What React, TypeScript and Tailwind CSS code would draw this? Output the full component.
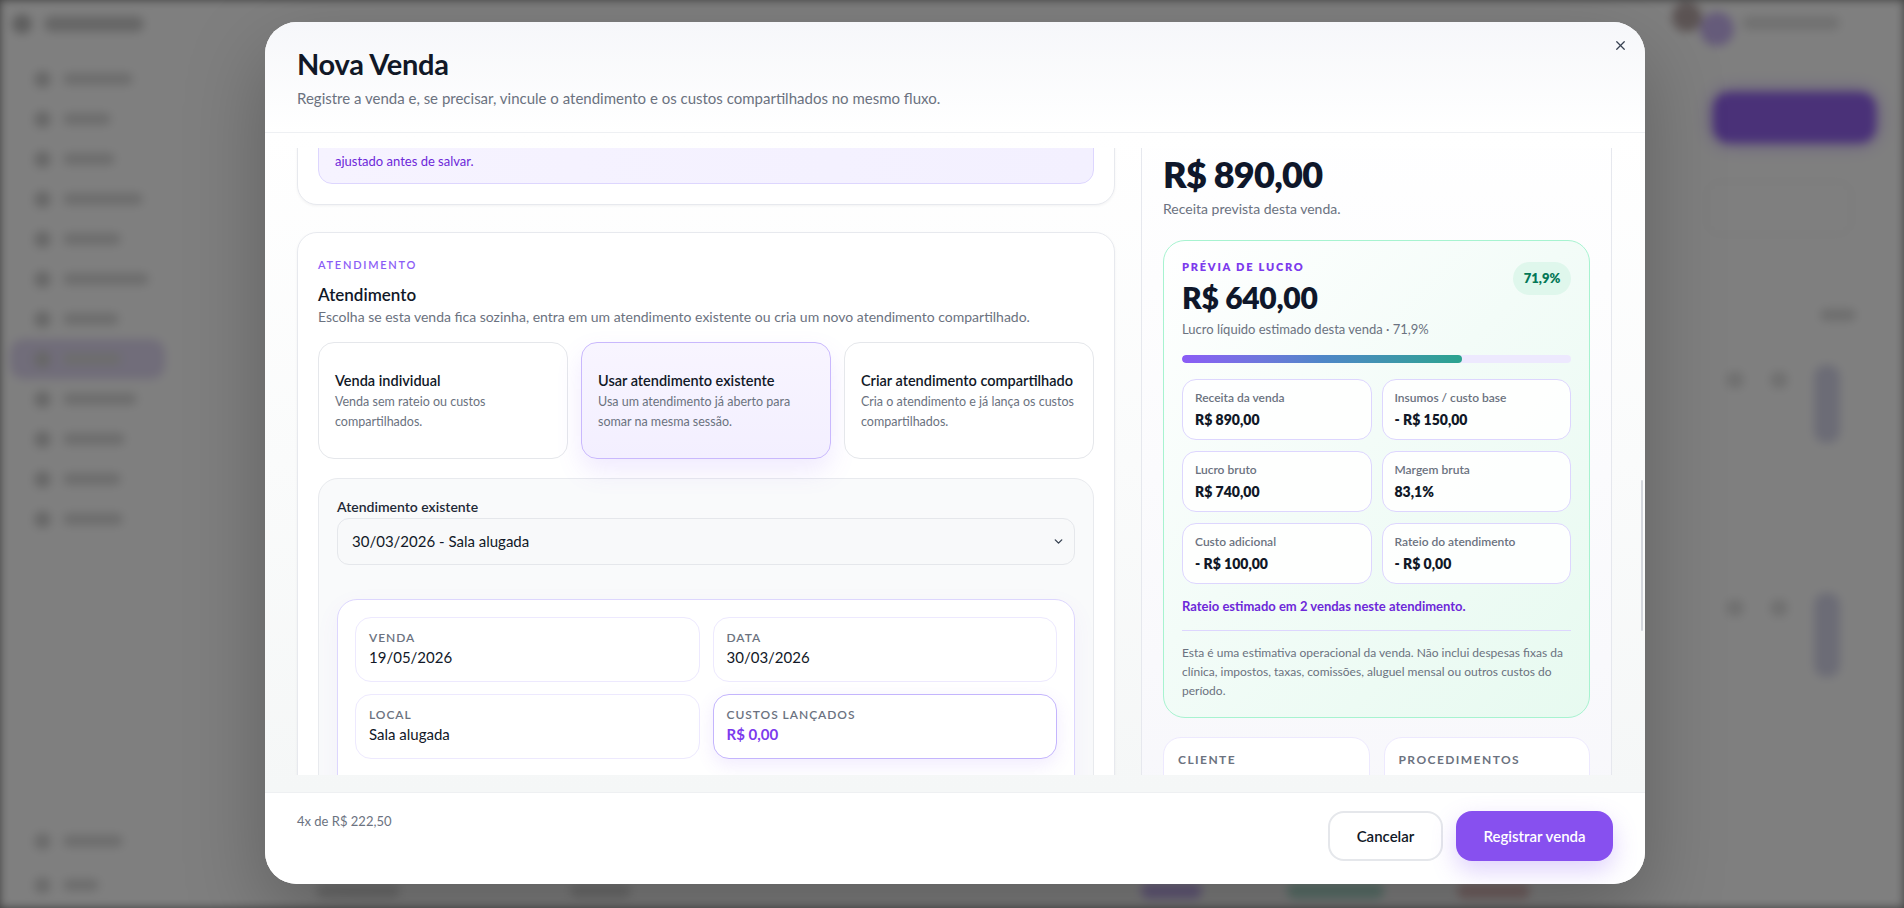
import React from "react";
import { X, ChevronDown } from "lucide-react";

const navItems = [
  { w: 70 },
  { w: 48 },
  { w: 52 },
  { w: 80 },
  { w: 58 },
  { w: 86 },
  { w: 56 },
  { w: 58, active: true },
  { w: 74 },
  { w: 62 },
  { w: 58 },
  { w: 60 },
];

function Backdrop() {
  return (
    <div className="absolute inset-0 flex bg-white blur-[5px]">
      <aside className="flex w-[175px] flex-col px-[10px] pt-[14px] pb-[8px]">
        <div className="flex h-[20px] items-center gap-[12px] pl-[2px]">
          <div className="h-[20px] w-[20px] rounded-full bg-[#bdbdbd]" />
          <div className="h-[16px] w-[100px] rounded-full bg-[#cdcdcd]" />
        </div>
        <div className="mt-[25px] flex flex-col">
          {navItems.map((n, i) => (
            <div
              key={i}
              className={
                n.active
                  ? "flex h-[40px] items-center gap-[12px] rounded-[14px] bg-[#e2daf4] pl-[24px]"
                  : "flex h-[40px] items-center gap-[12px] rounded-[14px] pl-[24px]"
              }
            >
              <div className="h-[17px] w-[17px] rounded-full bg-[#cfcfcf]" />
              <div className="h-[12px] rounded-full bg-[#dadada]" style={{ width: n.w }} />
            </div>
          ))}
        </div>
        <div className="mt-auto flex flex-col gap-[14px]">
          <div className="flex h-[30px] items-center gap-[12px] pl-[24px]">
            <div className="h-[17px] w-[17px] rounded-full bg-[#d6d6d6]" />
            <div className="h-[12px] w-[60px] rounded-full bg-[#dadada]" />
          </div>
          <div className="flex h-[30px] items-center gap-[12px] pl-[24px]">
            <div className="h-[17px] w-[17px] rounded-full bg-[#d6d6d6]" />
            <div className="h-[12px] w-[36px] rounded-full bg-[#dadada]" />
          </div>
        </div>
      </aside>
      <main className="flex flex-1 flex-col items-end pr-[28px]">
        <div className="flex h-[56px] items-start gap-[8px] pt-[2px] pr-[36px]">
          <div className="h-[30px] w-[30px] rounded-full bg-[#b9a9a9]" />
          <div className="-ml-[10px] mt-[10px] h-[34px] w-[34px] rounded-full bg-[#cbb6f5]" />
          <div className="mt-[14px] h-[14px] w-[98px] rounded-full bg-[#e2e2e2]" />
        </div>
        <div className="mt-[36px] h-[51px] w-[163px] rounded-[16px] bg-[#9463f1] shadow-[0_0_18px_rgba(148,99,241,0.6)]" />
        <div className="mt-[38px] mr-[24px] h-[54px] w-[146px] rounded-[12px] border border-[#e6e6e6] bg-white" />
        <div className="mt-[74px] mr-[20px] h-[12px] w-[36px] rounded-full bg-[#dcdcdc]" />
        <div className="mt-[44px] flex items-start gap-[26px] pr-[36px]">
          <div className="mt-[6px] h-[18px] w-[18px] rounded-full bg-[#e0e0e0]" />
          <div className="mt-[6px] h-[18px] w-[18px] rounded-full bg-[#e0e0e0]" />
          <div className="h-[78px] w-[26px] rounded-[12px] bg-[#d8d8ec]" />
        </div>
        <div className="mt-[150px] flex items-start gap-[26px] pr-[36px]">
          <div className="mt-[6px] h-[18px] w-[18px] rounded-full bg-[#e0e0e0]" />
          <div className="mt-[6px] h-[18px] w-[18px] rounded-full bg-[#e0e0e0]" />
          <div className="h-[84px] w-[26px] rounded-[12px] bg-[#d8d8ec]" />
        </div>
        <div className="mt-auto mb-[8px] flex h-[18px] w-full items-center">
          <div className="ml-[141px] h-[14px] w-[84px] rounded-full bg-[#dcdcdc]" />
          <div className="ml-[170px] h-[14px] w-[61px] rounded-full bg-[#dcdcdc]" />
          <div className="ml-[510px] h-[16px] w-[61px] rounded-full bg-[#c8b4f5]" />
          <div className="ml-[85px] h-[16px] w-[97px] rounded-full bg-[#b5e3d5]" />
          <div className="ml-[73px] h-[16px] w-[73px] rounded-full bg-[#e6c4c4]" />
        </div>
      </main>
    </div>
  );
}

function OptionCard({
  title,
  lines,
  selected,
}: {
  title: string;
  lines: string[];
  selected?: boolean;
}) {
  return (
    <div
      className={
        selected
          ? "flex h-[117px] flex-col justify-center rounded-[16px] border border-[#c9b8fd] bg-gradient-to-b from-[#f8f5ff] to-[#f3efff] px-4 shadow-[0_12px_26px_rgba(139,92,246,0.13)]"
          : "flex h-[117px] flex-col justify-center rounded-[16px] border border-[#e5e7eb] bg-white px-4"
      }
    >
      <div className="whitespace-nowrap text-[14.5px] font-semibold leading-[22px] text-[#111827]">{title}</div>
      {lines.map((l) => (
        <div key={l} className="whitespace-nowrap text-[12.5px] leading-5 text-[#6b7280]">
          {l}
        </div>
      ))}
    </div>
  );
}

function InfoCell({ label, value, accent }: { label: string; value: string; accent?: boolean }) {
  return (
    <div
      className={
        accent
          ? "rounded-[16px] border border-[#c4b5fd] bg-white px-[13px] pt-[12px] pb-[14px] shadow-[0_6px_18px_rgba(139,92,246,0.12)]"
          : "rounded-[16px] border border-[#ede9fe] bg-white px-[13px] pt-[12px] pb-[14px]"
      }
    >
      <div className="text-[12px] font-semibold uppercase leading-4 tracking-[0.08em] text-[#6b7280]">{label}</div>
      <div
        className={
          accent
            ? "mt-px text-[15px] font-bold leading-5 text-[#7c3aed]"
            : "mt-px text-[15px] leading-5 text-[#111827]"
        }
      >
        {value}
      </div>
    </div>
  );
}

function Metric({ label, value }: { label: string; value: string }) {
  return (
    <div className="rounded-[14px] border border-[#ddd6fe] bg-white/90 px-[12px] pt-[10px] pb-[9px]">
      <div className="text-[12px] font-semibold leading-4 text-[#6b7280]">{label}</div>
      <div className="mt-[4px] text-[14px] font-extrabold leading-5 text-[#111827]">{value}</div>
    </div>
  );
}

function LeftColumn() {
  return (
    <div className="flex flex-col gap-[27px]">
      <section className="rounded-[20px] border border-[#e7e9ee] bg-white p-5 shadow-[0_1px_3px_rgba(15,23,42,0.05)]">
        <div className="rounded-[14px] border border-[#ddd6fe] bg-gradient-to-r from-[#f6f3ff] to-[#f3f0ff] px-4 pt-[34px] pb-[12px] text-[13px] leading-5 text-[#6d28d9]">
          <span className="block">ajustado antes de salvar.</span>
        </div>
      </section>

      <section className="rounded-[20px] border border-[#e7e9ee] bg-white px-5 pt-6 pb-5 shadow-[0_1px_3px_rgba(15,23,42,0.05)]">
        <div className="text-[11px] font-semibold leading-4 tracking-[0.16em] text-[#8b5cf6]">ATENDIMENTO</div>
        <h3 className="mt-[10px] text-[17px] font-semibold leading-6 text-[#111827]">Atendimento</h3>
        <p className="text-[14px] leading-5 text-[#6b7280]">
          Escolha se esta venda fica sozinha, entra em um atendimento existente ou cria um novo atendimento compartilhado.
        </p>
        <div className="mt-[15px] grid grid-cols-3 gap-[13px]">
          <OptionCard title="Venda individual" lines={["Venda sem rateio ou custos", "compartilhados."]} />
          <OptionCard
            title="Usar atendimento existente"
            lines={["Usa um atendimento já aberto para", "somar na mesma sessão."]}
            selected
          />
          <OptionCard
            title="Criar atendimento compartilhado"
            lines={["Cria o atendimento e já lança os custos", "compartilhados."]}
          />
        </div>

        <div className="mt-[19px] rounded-[20px] border border-[#e8eaee] bg-[#f9fafb] px-[18px] pt-[18px] pb-[18px]">
          <label className="block text-[14px] font-semibold leading-5 text-[#1f2937]">Atendimento existente</label>
          <div className="mt-px flex h-[47px] items-center justify-between rounded-[12px] border border-[#e5e7eb] bg-[#f8f9fa] pl-[14px] pr-[9px] text-[15px] text-[#111827]">
            <span>30/03/2026 - Sala alugada</span>
            <ChevronDown size={13} strokeWidth={2.5} className="text-[#374151]" />
          </div>
          <div className="mt-[34px] rounded-[20px] border border-[#ddd6fe] bg-white p-[17px] shadow-[0_8px_24px_rgba(139,92,246,0.06)]">
            <div className="grid grid-cols-2 gap-x-[13px] gap-y-[12px]">
              <InfoCell label="Venda" value="19/05/2026" />
              <InfoCell label="Data" value="30/03/2026" />
              <InfoCell label="Local" value="Sala alugada" />
              <InfoCell label="Custos lançados" value="R$ 0,00" accent />
            </div>
            <div className="mt-[24px] h-[60px] rounded-[14px] border border-[#ede9fe] bg-[#faf8ff]" />
          </div>
        </div>
      </section>
    </div>
  );
}

function RightPanel() {
  return (
    <aside className="rounded-[24px] border border-[#e6e8ee] bg-gradient-to-b from-white to-[#f7f7fb] px-[21px] pt-5 pb-6">
      <div className="h-4" />
      <div className="mt-[22px] text-[36px] font-extrabold leading-10 tracking-[-0.02em] text-[#0f172a]">R$ 890,00</div>
      <div className="mt-[5px] text-[14px] leading-5 text-[#6b7280]">Receita prevista desta venda.</div>

      <div className="mt-[21px] rounded-[22px] border border-[#a7f3d0] bg-[linear-gradient(135deg,#ffffff_0%,#f3fcf8_45%,#e7faf0_100%)] px-[18px] pt-[18px] pb-[17px]">
        <div className="flex items-start justify-between">
          <div>
            <div className="text-[11px] font-extrabold leading-4 tracking-[0.16em] text-[#7c3aed]">PRÉVIA DE LUCRO</div>
            <div className="mt-1 text-[30px] font-extrabold leading-9 tracking-[-0.01em] text-[#0f172a]">R$ 640,00</div>
            <div className="mt-[5px] text-[13px] leading-[18px] text-[#6b7280]">Lucro líquido estimado desta venda · 71,9%</div>
          </div>
          <div className="mt-[3px] flex h-[33px] w-[58px] items-center justify-center rounded-full bg-[#dff7ec] text-[13px] font-extrabold text-[#047857]">
            71,9%
          </div>
        </div>
        <div className="mt-[17px] h-2 w-full overflow-hidden rounded-full bg-[#ede9fe]">
          <div
            className="h-full rounded-full bg-gradient-to-r from-[#8b5cf6] via-[#4f86c8] to-[#2aa38e]"
            style={{ width: "71.9%" }}
          />
        </div>
        <div className="mt-4 grid grid-cols-2 gap-x-[10px] gap-y-[11px]">
          <Metric label="Receita da venda" value="R$ 890,00" />
          <Metric label="Insumos / custo base" value="- R$ 150,00" />
          <Metric label="Lucro bruto" value="R$ 740,00" />
          <Metric label="Margem bruta" value="83,1%" />
          <Metric label="Custo adicional" value="- R$ 100,00" />
          <Metric label="Rateio do atendimento" value="- R$ 0,00" />
        </div>
        <div className="mt-[13px] text-[13px] font-bold leading-[18px] text-[#6d28d9]">
          Rateio estimado em 2 vendas neste atendimento.
        </div>
        <div className="mt-[15px] border-t border-[#ddd6fe]" />
        <p className="mt-[12px] text-[12px] leading-[19px] text-[#6b7280]">
          Esta é uma estimativa operacional da venda. Não inclui despesas fixas da clínica, impostos, taxas, comissões, aluguel
          mensal ou outros custos do período.
        </p>
      </div>

      <div className="mt-[19px] grid grid-cols-2 gap-[14px]">
        <div className="h-[90px] rounded-[18px] border border-[#ede9fe] bg-white px-[14px] pt-[14px]">
          <div className="text-[12px] font-bold leading-4 tracking-[0.12em] text-[#6b7280]">CLIENTE</div>
        </div>
        <div className="h-[90px] rounded-[18px] border border-[#ede9fe] bg-white px-[14px] pt-[14px]">
          <div className="text-[12px] font-bold leading-4 tracking-[0.12em] text-[#6b7280]">PROCEDIMENTOS</div>
        </div>
      </div>
    </aside>
  );
}

function Modal() {
  return (
    <div className="relative flex h-[862px] w-[1380px] flex-col overflow-hidden rounded-[32px] bg-white shadow-[0_30px_80px_rgba(0,0,0,0.25)]">
      <header className="border-b border-[#eef0f3] bg-gradient-to-b from-[#f6f7fa] to-white px-8 pt-6 pb-[23px]">
        <h2 className="text-[29px] font-bold leading-9 tracking-[-0.01em] text-[#111827]">Nova Venda</h2>
        <p className="mt-[5px] text-[15px] leading-[22px] text-[#6b7280]">
          Registre a venda e, se precisar, vincule o atendimento e os custos compartilhados no mesmo fluxo.
        </p>
      </header>
      <button className="absolute right-[13px] top-[11px] flex h-6 w-6 items-center justify-center text-[#374151]">
        <X size={15} strokeWidth={2} />
      </button>

      <div className="relative flex-1 overflow-hidden bg-gradient-to-b from-white to-[#f5f7f7] pt-[15px] pb-[17px]">
        <div className="h-full overflow-hidden px-8">
          <div className="-mt-[53px] grid grid-cols-[818px_471px] items-start gap-[26px]">
            <LeftColumn />
            <RightPanel />
          </div>
        </div>
        <div className="absolute right-[2px] top-[347px] h-[151px] w-[2px] rounded-full bg-[#d3d6dc]" />
      </div>

      <footer className="flex h-[92px] items-start justify-between border-t border-[#eef0f2] bg-white px-8 pt-[18px]">
        <div className="text-[13px] leading-5 text-[#6b7280]">4x de R$ 222,50</div>
        <div className="flex gap-[13px]">
          <button className="h-[50px] w-[115px] rounded-[16px] border-2 border-[#e5e7eb] bg-white text-[15px] font-semibold text-[#111827]">
            Cancelar
          </button>
          <button className="h-[50px] w-[157px] rounded-[16px] bg-[#8750ef] text-[15px] font-semibold text-white shadow-[0_10px_25px_rgba(139,92,246,0.28)]">
            Registrar venda
          </button>
        </div>
      </footer>
    </div>
  );
}

export default function App() {
  return (
    <div className="relative h-[908px] w-[1904px] overflow-hidden bg-[#808080] font-['Lato','Noto_Sans',sans-serif]">
      <Backdrop />
      <div className="absolute inset-0 bg-black/50" />
      <div className="absolute inset-0 flex justify-center pt-[22px] pl-[6px]">
        <Modal />
      </div>
    </div>
  );
}
